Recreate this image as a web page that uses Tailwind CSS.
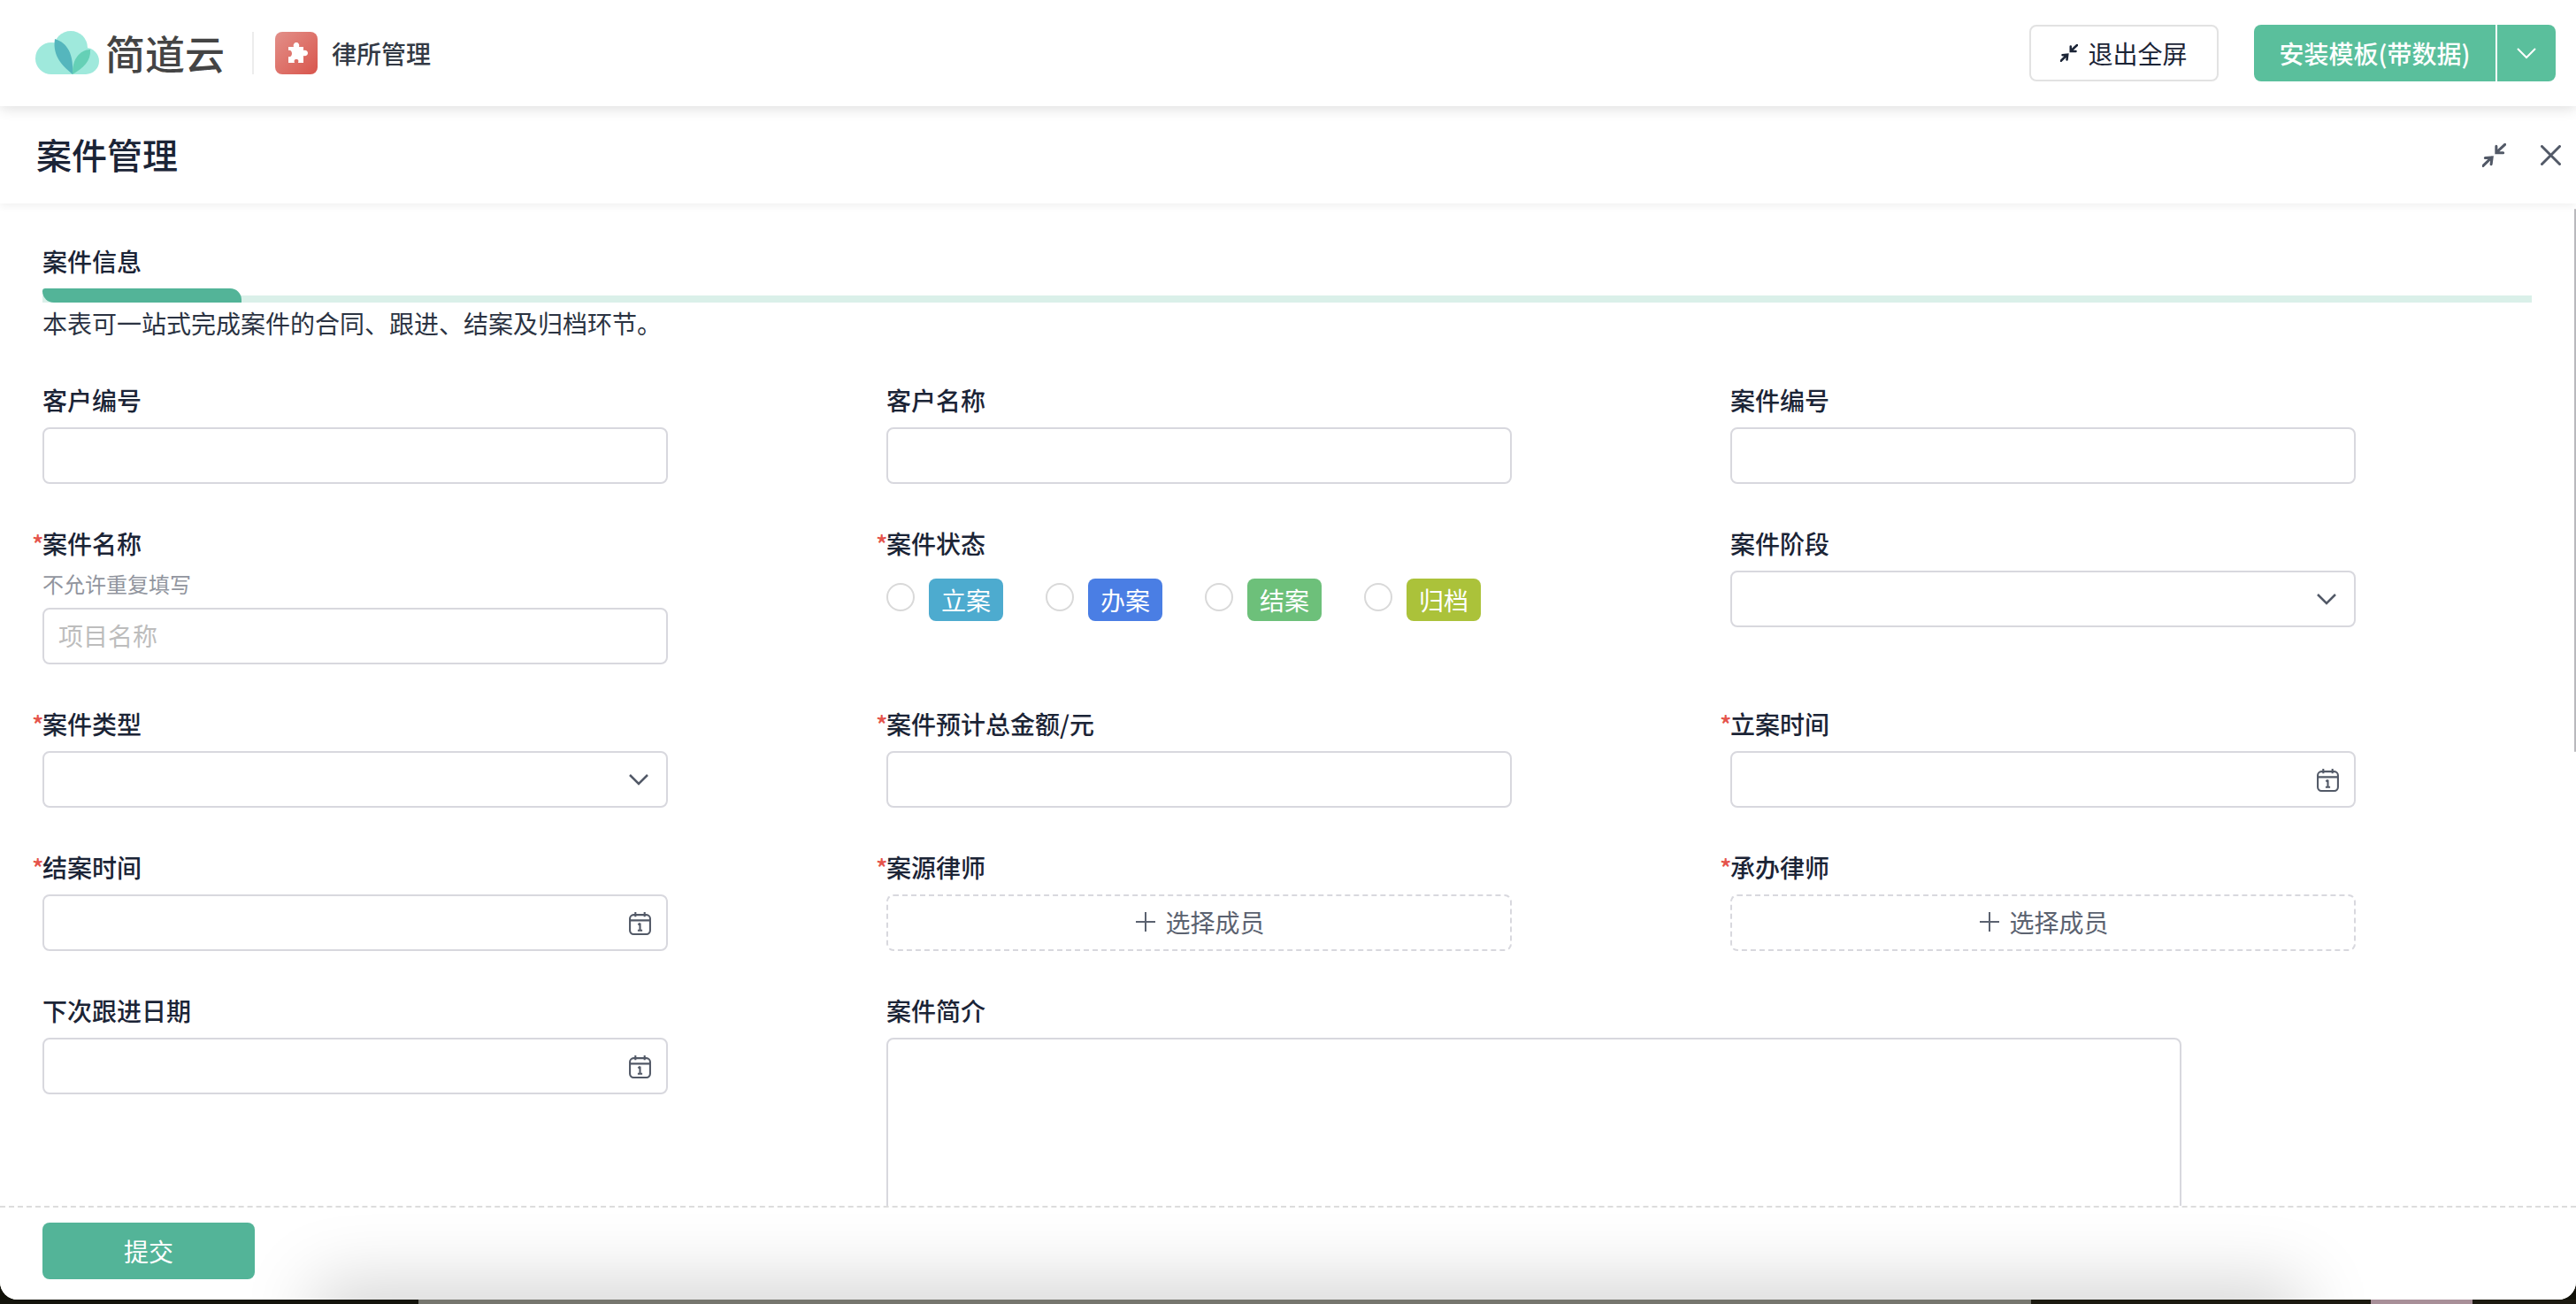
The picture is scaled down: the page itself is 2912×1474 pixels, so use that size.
<!DOCTYPE html>
<html lang="zh-CN">
<head>
    <meta charset="UTF-8">
    <title>案件管理 - 简道云</title>
    <script src="https://cdn.jsdelivr.net/npm/@tailwindcss/browser@4"></script>
</head>
<body class="w-[2912px] h-[1474px] overflow-hidden bg-[#111108] font-['Noto_Sans_CJK_SC',sans-serif] text-[28px] text-[#1b2436]">
    <div class="relative flex flex-col h-[1469px] bg-white rounded-b-[20px] overflow-hidden">

        <!-- 顶部栏 -->
        <header class="relative z-20 flex items-center h-[120px] shrink-0 pl-[40px] pr-[23px] bg-white shadow-[0_3px_14px_rgba(0,0,0,0.13)]">
            <svg class="w-[72px] h-[50px]" viewBox="0 0 72 50">
                <circle cx="18" cy="31" r="18" fill="#9fe9dc"/>
                <circle cx="40" cy="19" r="19" fill="#9fe9dc"/>
                <circle cx="57" cy="34" r="15" fill="#9fe9dc"/>
                <rect x="18" y="30" width="39" height="19" fill="#9fe9dc"/>
                <path d="M22 9C32 12 44 21 42 49C32 40 19 30 22 9Z" fill="#55b6bd"/>
                <path d="M42 49C41 33 50 21 62 21C63 34 54 42 42 49Z" fill="#65d0b6"/>
            </svg>
            <span class="ml-[7px] w-[134px] whitespace-nowrap text-[45px] leading-[50px] font-medium text-[#444444]">简道云</span>
            <div class="ml-[32px] w-[2px] h-[48px] bg-[#ececec]"></div>
            <div class="ml-[24px] flex items-center justify-center w-[48px] h-[48px] rounded-[8px] bg-gradient-to-br from-[#e28f89] to-[#d8544c]">
                <svg class="w-[26px] h-[26px]" viewBox="0 0 26 26" fill="#ffffff">
                    <path d="M4 6H10C9 3 11 1 13 1C15 1 17 3 16 6H21V10C24 9 26 11 26 13C26 15 24 17 21 16V24H15C16 21 15 20 13 20C11 20 10 21 11 24H4V17C6 18 8 16 8 13.500C8 11 6 9 4 10Z"/>
                </svg>
            </div>
            <span class="ml-[16px] font-medium text-[#333a45]">律所管理</span>

            <div class="ml-auto flex items-center gap-[40px]">
                <button class="flex items-center justify-center w-[214px] h-[64px] rounded-[8px] border-2 border-[#e2e2e2] bg-white">
                    <svg class="w-[20px] h-[20px] mr-[11px]" viewBox="0 0 80 80" fill="none" stroke="#1b2436" stroke-width="10" stroke-linecap="round">
                        <path d="M2 76L32 47M10 49L33 47L30 70"/>
                        <path d="M76 4L48 30M47 10L47 32L70 32"/>
                    </svg>
                    退出全屏
                </button>
                <div class="flex h-[64px] text-white font-medium">
                    <button class="w-[273px] rounded-l-[8px] bg-[#5abf9c]">安装模板(带数据)</button>
                    <button class="flex items-center justify-center w-[66px] ml-[2px] rounded-r-[8px] bg-[#5abf9c]">
                        <svg class="w-[22px] h-[13px]" viewBox="0 0 22 13" fill="none" stroke="#ffffff" stroke-width="2">
                            <path d="M1 1L11 11L21 1"/>
                        </svg>
                    </button>
                </div>
            </div>
        </header>

        <!-- 表单标题 -->
        <div class="relative z-10 flex items-center h-[110px] shrink-0 pl-[41px] pr-[17px] bg-white shadow-[0_2px_10px_rgba(0,0,0,0.07)]">
            <h1 class="pb-[3px] text-[40px] leading-[56px] font-medium">案件管理</h1>
            <svg class="ml-auto w-[27px] h-[27px]" viewBox="0 0 80 80" fill="none" stroke="#525967" stroke-width="9" stroke-linecap="round">
                <path d="M2 76L32 47M10 49L33 47L30 70"/>
                <path d="M76 4L48 30M47 10L47 32L70 32"/>
            </svg>
            <svg class="ml-[39px] w-[23px] h-[23px]" viewBox="0 0 23 23" fill="none" stroke="#525967" stroke-width="3" stroke-linecap="round">
                <path d="M1.5 1.5L21.5 21.5M21.5 1.5L1.5 21.5"/>
            </svg>
        </div>

        <!-- 表单内容 -->
        <main class="relative flex-1 overflow-hidden pl-[48px] pr-[50px] pt-[47px]">
            <div class="absolute top-[6px] right-0 w-[2px] h-[614px] rounded-full bg-[#b9b9bd]"></div>

            <h2 class="h-[40px] leading-[36px] font-medium">案件信息</h2>
            <div class="relative mt-[9px] h-[16px]">
                <div class="absolute left-0 right-0 bottom-0 h-[8px] bg-[#daf0e9]"></div>
                <div class="absolute left-0 top-0 w-[225px] h-[16px] bg-[#53b498] rounded-tr-[16px] rounded-bl-[16px] rounded-tl-[4px]"></div>
            </div>
            <p class="mt-[5px] h-[40px] leading-[36px] text-[#2b3342]">本表可一站式完成案件的合同、跟进、结案及归档环节。</p>

            <div class="mt-[46px] grid grid-cols-[707px_707px_707px] gap-x-[247px] gap-y-[48px] items-start">
                <div>
                    <label class="block h-[40px] leading-[38px] font-medium">客户编号</label>
                    <div class="mt-[10px] h-[64px] rounded-[8px] border-2 border-[#d8d8de]"></div>
                </div>
                <div>
                    <label class="block h-[40px] leading-[38px] font-medium">客户名称</label>
                    <div class="mt-[10px] h-[64px] rounded-[8px] border-2 border-[#d8d8de]"></div>
                </div>
                <div>
                    <label class="block h-[40px] leading-[38px] font-medium">案件编号</label>
                    <div class="mt-[10px] h-[64px] rounded-[8px] border-2 border-[#d8d8de]"></div>
                </div>

                <div>
                    <label class="relative block h-[40px] leading-[38px] font-medium"><span class="absolute left-[-12px] text-[#e5534b]">*</span>案件名称</label>
                    <p class="mt-[10px] h-[32px] leading-[30px] text-[24px] text-[#91959e]">不允许重复填写</p>
                    <div class="mt-[10px] flex items-center h-[64px] px-[16px] pb-[2px] rounded-[8px] border-2 border-[#d8d8de] text-[#bdbdbd]">项目名称</div>
                </div>
                <div>
                    <label class="relative block h-[40px] leading-[38px] font-medium"><span class="absolute left-[-12px] text-[#e5534b]">*</span>案件状态</label>
                    <div class="mt-[19px] flex gap-[48px] text-white">
                        <div class="flex items-start gap-[16px]">
                            <span class="mt-[5px] w-[32px] h-[32px] rounded-full border-2 border-[#d9d9d9]"></span>
                            <span class="w-[84px] h-[48px] leading-[48px] text-center rounded-[8px] bg-[#4dabcf]">立案</span>
                        </div>
                        <div class="flex items-start gap-[16px]">
                            <span class="mt-[5px] w-[32px] h-[32px] rounded-full border-2 border-[#d9d9d9]"></span>
                            <span class="w-[84px] h-[48px] leading-[48px] text-center rounded-[8px] bg-[#4a7ee4]">办案</span>
                        </div>
                        <div class="flex items-start gap-[16px]">
                            <span class="mt-[5px] w-[32px] h-[32px] rounded-full border-2 border-[#d9d9d9]"></span>
                            <span class="w-[84px] h-[48px] leading-[48px] text-center rounded-[8px] bg-[#6dc07a]">结案</span>
                        </div>
                        <div class="flex items-start gap-[16px]">
                            <span class="mt-[5px] w-[32px] h-[32px] rounded-full border-2 border-[#d9d9d9]"></span>
                            <span class="w-[84px] h-[48px] leading-[48px] text-center rounded-[8px] bg-[#abc23a]">归档</span>
                        </div>
                    </div>
                </div>
                <div>
                    <label class="block h-[40px] leading-[38px] font-medium">案件阶段</label>
                    <div class="mt-[10px] flex items-center justify-end h-[64px] pr-[20px] rounded-[8px] border-2 border-[#d8d8de]">
                        <svg class="w-[22px] h-[13px]" viewBox="0 0 22 13" fill="none" stroke="#525967" stroke-width="2.5"><path d="M1 1L11 11L21 1"/></svg>
                    </div>
                </div>

                <div>
                    <label class="relative block h-[40px] leading-[38px] font-medium"><span class="absolute left-[-12px] text-[#e5534b]">*</span>案件类型</label>
                    <div class="mt-[10px] flex items-center justify-end h-[64px] pr-[20px] rounded-[8px] border-2 border-[#d8d8de]">
                        <svg class="w-[22px] h-[13px]" viewBox="0 0 22 13" fill="none" stroke="#525967" stroke-width="2.5"><path d="M1 1L11 11L21 1"/></svg>
                    </div>
                </div>
                <div>
                    <label class="relative block h-[40px] leading-[38px] font-medium"><span class="absolute left-[-12px] text-[#e5534b]">*</span>案件预计总金额/元</label>
                    <div class="mt-[10px] h-[64px] rounded-[8px] border-2 border-[#d8d8de]"></div>
                </div>
                <div>
                    <label class="relative block h-[40px] leading-[38px] font-medium"><span class="absolute left-[-12px] text-[#e5534b]">*</span>立案时间</label>
                    <div class="mt-[10px] flex items-center justify-end h-[64px] pr-[16px] rounded-[8px] border-2 border-[#d8d8de]">
                        <svg class="w-[27px] h-[27px]" viewBox="0 0 26 26" fill="none" stroke="#525967" stroke-width="2"><rect x="2" y="4" width="22" height="21" rx="4"/><path d="M2 10H24M8 1V6M18 1V6M13 13V21M11 15L13 13M10.5 21H15.5" /></svg>
                    </div>
                </div>

                <div>
                    <label class="relative block h-[40px] leading-[38px] font-medium"><span class="absolute left-[-12px] text-[#e5534b]">*</span>结案时间</label>
                    <div class="mt-[10px] flex items-center justify-end h-[64px] pr-[16px] rounded-[8px] border-2 border-[#d8d8de]">
                        <svg class="w-[27px] h-[27px]" viewBox="0 0 26 26" fill="none" stroke="#525967" stroke-width="2"><rect x="2" y="4" width="22" height="21" rx="4"/><path d="M2 10H24M8 1V6M18 1V6M13 13V21M11 15L13 13M10.5 21H15.5" /></svg>
                    </div>
                </div>
                <div>
                    <label class="relative block h-[40px] leading-[38px] font-medium"><span class="absolute left-[-12px] text-[#e5534b]">*</span>案源律师</label>
                    <div class="mt-[10px] flex items-center justify-center h-[64px] pl-[3px] pb-[2px] rounded-[8px] border-2 border-dashed border-[#d8d8de] text-[#5b6270]">
                        <svg class="w-[22px] h-[22px] mr-[11px]" viewBox="0 0 22 22" fill="none" stroke="#5b6270" stroke-width="2"><path d="M11 0V22M0 11H22"/></svg>
                        选择成员
                    </div>
                </div>
                <div>
                    <label class="relative block h-[40px] leading-[38px] font-medium"><span class="absolute left-[-12px] text-[#e5534b]">*</span>承办律师</label>
                    <div class="mt-[10px] flex items-center justify-center h-[64px] pl-[3px] pb-[2px] rounded-[8px] border-2 border-dashed border-[#d8d8de] text-[#5b6270]">
                        <svg class="w-[22px] h-[22px] mr-[11px]" viewBox="0 0 22 22" fill="none" stroke="#5b6270" stroke-width="2"><path d="M11 0V22M0 11H22"/></svg>
                        选择成员
                    </div>
                </div>

                <div>
                    <label class="block h-[40px] leading-[38px] font-medium">下次跟进日期</label>
                    <div class="mt-[10px] flex items-center justify-end h-[64px] pr-[16px] rounded-[8px] border-2 border-[#d8d8de]">
                        <svg class="w-[27px] h-[27px]" viewBox="0 0 26 26" fill="none" stroke="#525967" stroke-width="2"><rect x="2" y="4" width="22" height="21" rx="4"/><path d="M2 10H24M8 1V6M18 1V6M13 13V21M11 15L13 13M10.5 21H15.5" /></svg>
                    </div>
                </div>
                <div class="col-span-2">
                    <label class="block h-[40px] leading-[38px] font-medium">案件简介</label>
                    <div class="mt-[10px] w-[1464px] h-[300px] rounded-[8px] border-2 border-[#d8d8de]"></div>
                </div>
            </div>
        </main>

        <!-- 底部提交 -->
        <footer class="relative z-10 flex items-start h-[106px] shrink-0 pl-[48px] pt-[17px] bg-white border-t-2 border-dashed border-[#dcdcdc] overflow-hidden">
            <button class="w-[240px] h-[64px] rounded-[8px] bg-[#53b498] text-white">提交</button>
            <div class="absolute left-[375px] right-[330px] bottom-[-50px] h-[50px] shadow-[0_0_80px_20px_rgba(0,0,0,0.17)]"></div>
        </footer>
    </div>

    <!-- 窗口下方露出的桌面 -->
    <div class="flex h-[5px]">
        <div class="w-[473px] bg-[#14140c]"></div>
        <div class="w-[1823px] bg-[#76766e]"></div>
        <div class="w-[384px] bg-[#1c1a10]"></div>
        <div class="w-[115px] bg-[#a88f98]"></div>
        <div class="flex-1 bg-[#1c1a10]"></div>
    </div>
</body>
</html>
